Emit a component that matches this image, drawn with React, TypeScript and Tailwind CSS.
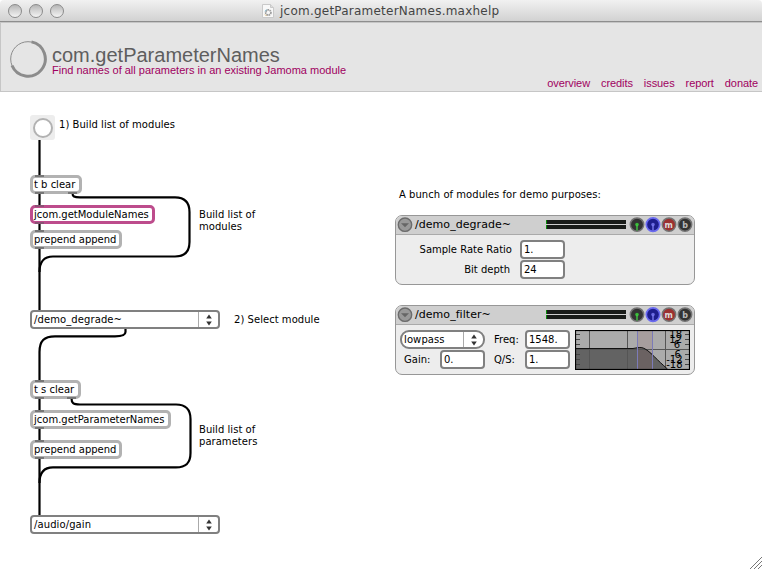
import type { ReactNode } from "react";
import { clsx } from "clsx";

const VERDANA = "font-['DejaVu_Sans',sans-serif] text-[10px] leading-[12px] text-black";

function TrafficLight() {
  return (
    <span className="size-[14px] rounded-full border border-[#8b8b8b] bg-gradient-to-b from-[#b5b5b5] via-[#d6d6d6] to-[#f4f4f4]" />
  );
}

function TitleBar() {
  return (
    <div className="flex h-[22px] shrink-0 items-center rounded-t-[4px] border-b border-[#8e8e8e] bg-gradient-to-b from-[#f1f1f1] to-[#d2d2d2]">
      <div className="flex gap-[7px] pl-2">
        <TrafficLight />
        <TrafficLight />
        <TrafficLight />
      </div>
      <div className="ml-[198px] flex items-center gap-[6px] pt-px">
        <svg width="12" height="14" viewBox="0 0 12 14">
          <path d="M.5.5h8l3 3v10H.5z" fill="#f8f8f8" stroke="#c9c9c9" />
          <path d="M8.500.5v3h3" fill="#ddd" stroke="#c9c9c9" />
          <circle cx="6.300" cy="8.500" r="2.600" fill="none" stroke="#9a9a9a" strokeWidth="1.800" strokeDasharray="1.600 .6" />
          <path d="M3 7.500L4.500 5.500" stroke="#8cc6dc" />
          <path d="M3 10.500l1.500 1.500" stroke="#e5c07a" />
        </svg>
        <span className="whitespace-nowrap font-['DejaVu_Sans',sans-serif] text-[12px] leading-[16px] tracking-[0.23px] text-[#444]">
          jcom.getParameterNames.maxhelp
        </span>
      </div>
    </div>
  );
}

function HelpHeader() {
  return (
    <header className="flex h-[70px] shrink-0 border-y border-l border-[#c6c6c6] bg-[#e5e5e5] font-['Liberation_Sans',sans-serif]">
      <svg className="ml-[8px] mt-[16px] shrink-0" width="38" height="40" viewBox="0 0 38 40">
        <circle cx="19" cy="20" r="17.300" fill="none" stroke="#8c8c8c" strokeWidth="1" />
        <path d="M22.500 2.900A17.300 17.300 0 1 1 3 26.500" fill="none" stroke="#8c8c8c" strokeWidth="3" />
      </svg>
      <div className="flex flex-col pl-[5px] pt-[21px]">
        <h1 className="whitespace-nowrap text-[20px] leading-[22px] text-[#5e5e5e]">com.getParameterNames</h1>
        <p className="-mt-[2px] whitespace-nowrap text-[11px] leading-[12px] text-[#a00060]">
          Find names of all parameters in an existing Jamoma module
        </p>
      </div>
      <nav className="ml-auto flex items-end gap-[11px] pb-[1px] pr-[4px] text-[11px] leading-[13px] tracking-[-0.08px] text-[#a00060]">
        <span>overview</span>
        <span>credits</span>
        <span>issues</span>
        <span>report</span>
        <span>donate</span>
      </nav>
    </header>
  );
}

function ObjectBox({ place, label, pink, outlets = "one" }: {
  place: string;
  label: string;
  pink?: boolean;
  outlets?: "one" | "two";
}) {
  return (
    <div className={clsx("absolute flex h-[19px] items-center rounded-[5px] border-[3px] bg-white pl-px", VERDANA, pink ? "border-[#bd4c8c]" : "border-[#b2b2b2]", place)}>
      <span className="whitespace-nowrap">{label}</span>
      <i className={clsx("absolute -top-[3px] left-[2px] h-[2px] w-[9px]", pink ? "bg-[#8c5275]" : "bg-[#777]")} />
      <i className={clsx("absolute -bottom-[3px] left-[2px] h-[2px] w-[9px]", pink ? "bg-[#8c5275]" : "bg-[#777]")} />
      {outlets === "two" && <i className="absolute -bottom-[3px] right-[2px] h-[2px] w-[9px] bg-[#777]" />}
    </div>
  );
}

function Arrows() {
  return (
    <svg width="6" height="12" viewBox="0 0 6 12" fill="#333">
      <path d="M3 .5L5.800 4.500H.2z" />
      <path d="M3 11.500L5.800 7.500H.2z" />
    </svg>
  );
}

function Menu({ className, label }: { className: string; label: string }) {
  return (
    <div className={clsx("flex h-[19px] items-stretch border-2 border-[#808080] bg-white", VERDANA, className)}>
      <span className="flex grow items-center whitespace-nowrap pl-[2px] tracking-[0.1px]">{label}</span>
      <span className="flex w-[20px] items-center justify-center border-l border-[#aaa]">
        <Arrows />
      </span>
    </div>
  );
}

function Comment({ className, children }: { className: string; children: ReactNode }) {
  return <p className={clsx("absolute whitespace-nowrap tracking-[0.04px]", VERDANA, className)}>{children}</p>;
}

function NumberBox({ value }: { value: string }) {
  return (
    <span className="flex h-[19px] w-[45px] items-center rounded-[4px] border-2 border-[#808080] bg-white pl-[2px]">
      {value}
    </span>
  );
}

function Meter() {
  return (
    <div className="mb-px flex w-[80px] flex-col gap-px">
      <span className="h-[4px] border-l border-[#0a8a0a] bg-[#191c19]" />
      <span className="h-[4px] border-l border-[#0a8a0a] bg-[#191c19]" />
    </div>
  );
}

function RoundButtons() {
  return (
    <svg width="64" height="16" viewBox="0 0 64 16" className="font-['DejaVu_Sans',sans-serif] text-[8px] font-bold">
      <circle cx="8" cy="7.600" r="6.700" fill="#333" stroke="#737373" strokeWidth="1.500" />
      <circle cx="8" cy="7.600" r="1.800" fill="#37b537" />
      <path d="M8 7.500v6" stroke="#45d045" strokeWidth="1.300" />
      <circle cx="24" cy="7.600" r="6.700" fill="#1e1e8c" stroke="#6a6af0" strokeWidth="1.700" />
      <circle cx="24" cy="7.600" r="1.800" fill="#6666dc" />
      <path d="M24 7.500v6" stroke="#8080f5" strokeWidth="1.300" />
      <circle cx="40" cy="7.600" r="6.700" fill="#9c3030" stroke="#737373" strokeWidth="1.500" />
      <text x="39.700" y="11" textAnchor="middle" fill="#ddd">m</text>
      <circle cx="56" cy="7.600" r="6.700" fill="#333" stroke="#737373" strokeWidth="1.500" />
      <text x="56" y="11" textAnchor="middle" fill="#bbb">b</text>
    </svg>
  );
}

function Module({ place, name, children }: { place: string; name: string; children: ReactNode }) {
  return (
    <section className={clsx("absolute flex h-[70px] w-[300px] flex-col overflow-hidden rounded-[7px] border border-[#979797] bg-[#ededed]", VERDANA, place)}>
      <div className="flex h-[19px] shrink-0 items-center border-b border-[#aaa] bg-[#cfcfcf] pl-px">
        <svg width="16" height="16" viewBox="0 0 16 16">
          <circle cx="8" cy="7.700" r="6.700" fill="#999" stroke="#6c6c6c" strokeWidth="1.400" />
          <path d="M4 6.200h8L8 10.200z" fill="#666" />
        </svg>
        <span className="mb-px w-[133px] whitespace-nowrap pl-[2px] text-[11px] leading-[16px] tracking-[0.05px]">{name}</span>
        <Meter />
        <span className="ml-[3px]">
          <RoundButtons />
        </span>
      </div>
      {children}
    </section>
  );
}

function FilterGraph() {
  return (
    <svg width="115" height="40" viewBox="0 0 115 40" className="font-['DejaVu_Sans',sans-serif] text-[10px]">
      <rect width="115" height="40" fill="#ababab" />
      <rect x="62.500" width="15" height="40" fill="#a69d9d" />
      <path d="M0 18.500H58L62 17.800C66 17.200 68 17.500 71 19.500C76 22.500 82 30 92.500 39V40H0z" fill="#636363" />
      <path d="M62.500 17.800C66 17.200 68 17.500 71 19.500L77.500 24.300V40H62.500z" fill="#6b6262" />
      <path d="M14.500 0V40M52.500 0V40M90.500 0V40" stroke="#555" />
      <path d="M0 19.500H115" stroke="#555" />
      <path d="M0 18.500H58L62 17.800C66 17.200 68 17.500 71 19.500C76 22.500 82 30 92.500 39" fill="none" stroke="#111" />
      <path d="M62.500 0V40M77.500 0V40" stroke="#7b7bb8" />
      <path d="M1 4.500H5M1 9.500H5M1 14.500H5M1 24.500H5M1 29.500H5M1 34.500H5M110 4.500H114M110 9.500H114M110 14.500H114M110 24.500H114M110 29.500H114M110 34.500H114" stroke="#444" />
      <g fill="#000" textAnchor="end">
        <text x="107" y="7.500">18</text>
        <text x="107" y="12.500">12</text>
        <text x="105" y="18">6</text>
        <text x="106" y="28">-6</text>
        <text x="107.500" y="33">-12</text>
        <text x="107.500" y="38">-18</text>
      </g>
      <rect x=".5" y=".5" width="114" height="39" fill="none" stroke="#000" strokeWidth="1.200" />
    </svg>
  );
}

function PatchCords() {
  return (
    <svg className="absolute left-0 top-0" width="300" height="477" viewBox="0 92 300 477" fill="none" stroke="#000" strokeWidth="2.200">
      <path d="M39.500 140V310M39.500 398V515" />
      <path d="M72.500 193C72.500 196.500 74 197.400 80 197.400H175C185 197.400 189.500 202 189.500 212V242C189.500 252 185 256.500 175 256.500H53C44 256.500 39.500 262 39.500 272" />
      <path d="M125.500 329V332C125.500 335 122 336.300 115 336.300H55C44 336.300 39.500 341 39.500 352V380" />
      <path d="M71.500 398C71.500 403 73 404.500 80 404.500H176C186 404.500 190.500 409 190.500 419V453C190.500 463 186 467.400 176 467.400H53C44 467.400 39.500 473 39.500 483" />
    </svg>
  );
}

function Patcher() {
  return (
    <main className="relative h-[477px] bg-white">
      <PatchCords />
      <div className="absolute left-[30px] top-[23px] flex size-[25px] items-center justify-center rounded-[3px] bg-[#ededed]">
        <span className="size-[20px] rounded-full border-2 border-[#b2b2b2] bg-white" />
      </div>
      <Comment className="left-[59px] top-[27px]">1) Build list of modules</Comment>
      <ObjectBox place="left-[30px] top-[83px] w-[52px]" label="t b clear" outlets="two" />
      <ObjectBox place="left-[30px] top-[113px] w-[125px]" label="jcom.getModuleNames" pink />
      <ObjectBox place="left-[30px] top-[138px] w-[92px]" label="prepend append" />
      <Comment className="left-[199px] top-[117px]">
        Build list of
        <br />
        modules
      </Comment>
      <Menu className="absolute left-[30px] top-[218px] w-[190px] rounded-[4px]" label="/demo_degrade~" />
      <Comment className="left-[234px] top-[222px]">2) Select module</Comment>
      <ObjectBox place="left-[30px] top-[288px] w-[51px]" label="t s clear" outlets="two" />
      <ObjectBox place="left-[30px] top-[318px] w-[141px]" label="jcom.getParameterNames" />
      <ObjectBox place="left-[30px] top-[348px] w-[92px]" label="prepend append" />
      <Comment className="left-[199px] top-[332px]">
        Build list of
        <br />
        parameters
      </Comment>
      <Menu className="absolute left-[30px] top-[423px] w-[190px] rounded-[4px]" label="/audio/gain" />

      <Comment className="left-[399px] top-[97px]">A bunch of modules for demo purposes:</Comment>
      <Module place="left-[395px] top-[123px]" name="/demo_degrade~">
        <div className="flex flex-col pl-[23px] pt-[5px]">
          <label className="flex h-[20px] items-center pb-px">
            <span className="w-[101px] whitespace-nowrap pr-[8px] text-right">Sample Rate Ratio</span>
            <NumberBox value="1." />
          </label>
          <label className="flex h-[20px] items-center pb-px">
            <span className="w-[101px] whitespace-nowrap pr-[10px] text-right">Bit depth</span>
            <NumberBox value="24" />
          </label>
        </div>
      </Module>
      <Module place="left-[395px] top-[213px]" name="/demo_filter~">
        <div className="flex gap-[5px] pl-[4px] pt-[5px]">
          <div className="flex w-[85px] flex-col gap-px">
            <Menu className="rounded-[9px]" label="lowpass" />
            <label className="flex h-[19px] items-center justify-between pl-[4px]">
              Gain:
              <NumberBox value="0." />
            </label>
          </div>
          <div className="flex w-[80px] flex-col gap-px">
            <label className="flex h-[19px] items-center justify-between pl-[4px]">
              Freq:
              <NumberBox value="1548." />
            </label>
            <label className="flex h-[19px] items-center justify-between pl-[4px]">
              Q/S:
              <NumberBox value="1." />
            </label>
          </div>
          <FilterGraph />
        </div>
      </Module>
      <svg className="absolute bottom-0 right-0" width="12" height="12" viewBox="0 0 12 12" stroke="#777" strokeWidth="1">
        <path d="M0 12L12 0M4 12L12 4M8 12L12 8" />
      </svg>
    </main>
  );
}

export default function App() {
  return (
    <div className="flex h-[569px] w-[762px] flex-col overflow-hidden bg-white">
      <TitleBar />
      <HelpHeader />
      <Patcher />
    </div>
  );
}
